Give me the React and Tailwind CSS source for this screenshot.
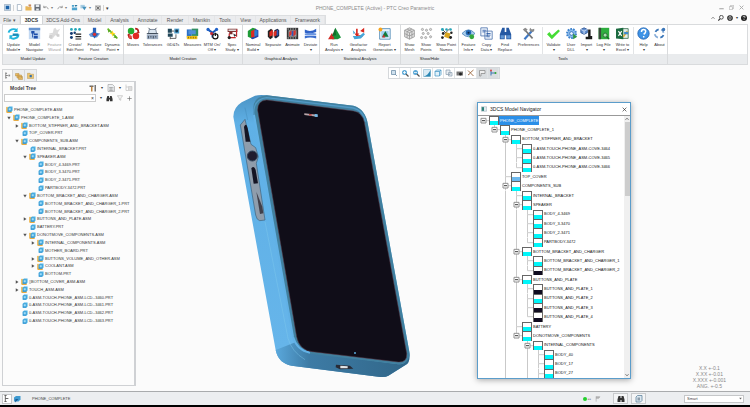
const CYAN = "#00f6fa";

const ribbonIcons = {
  update: (
    <g fill="none" stroke="#21b5dc" strokeWidth="2.4">
      <path d="M2 7a6 5 0 0 1 10-3M14 9a6 5 0 0 1-10 4" />
      <path d="M13 1v5H8zM3 15v-5h5z" fill="#21b5dc" stroke="none" />
      <path d="M7 8h7v3H7z" fill="#1b8bb9" stroke="none" />
    </g>
  ),
  navigator: (
    <g>
      <path d="M1 1h14v14H1z" fill="#c3d9f2" />
      <path d="M1 1h14v3H1z" fill="#6794d0" />
      <path d="M4 5h4v3H4zM7 8h5v2H7zM7 11h5v3H7zM5 8h1v5H5z" fill="#1d4faa" />
    </g>
  ),
  wizard: (
    <g fill="#b9b9b9">
      <path d="M7 2l2-1 2 3 4-2-3 5 2 4-5-1-4 5-3-2 4-3-5-2 5-1z" />
      <path d="M2 9l4 1-2 5-3-2zM10 9h4v3h-3z" fill="#a0a0a0" />
    </g>
  ),
  create: (
    <g>
      <g fill="#24a7b9"><circle cx="3" cy="3" r="1.7" /><circle cx="8" cy="3" r="1.7" /><circle cx="13" cy="3" r="1.7" /></g>
      <g fill="#143c72"><circle cx="3" cy="8" r="1.8" /><circle cx="7" cy="7" r="1.5" /><circle cx="3" cy="13" r="1.8" /></g>
      <path d="M8 8h7v1.500H8zM8 11h7v1.500H8zM8 14h7v1.500H8z" fill="#222" />
    </g>
  ),
  featurePoint: (
    <g>
      <path d="M1 9l5-3 9 2-4 5-8-1z" fill="#6d9ad6" />
      <path d="M6 1h4v7h3l-5 6-4-6h2z" fill="#2862b8" />
      <circle cx="8" cy="9" r="2" fill="#d33" />
    </g>
  ),
  dynamic: (
    <g>
      <path d="M2 2l12 12" stroke="#6bbf2b" strokeWidth="2" />
      <path d="M2 3l4 1-3 3zM14 14l-5-1 3-3z" fill="#5aa823" />
      <path d="M8 4l1 3 3 1-3 1-1 3-1-3-3-1 3-1z" fill="#ffd51e" />
    </g>
  ),
  moves: (
    <g>
      <circle cx="5" cy="5" r="4" fill="#26ac32" />
      <circle cx="11" cy="11" r="4" fill="#e02a22" />
      <path d="M10 1q5 0 5 5l1 0-2 2-3-2h2q0-3-3-3zM6 15q-5 0-5-5H0l2-2 3 2H3q0 3 3 3z" fill="#b5231e" />
      <circle cx="4" cy="12" r="2" fill="#e4483e" />
    </g>
  ),
  tolerances: (
    <g>
      <path d="M1 9h14v6H1z" fill="#9babc0" />
      <path d="M4 3h8l1 5H3z" fill="#dbe5ef" stroke="#68788c" />
      <path d="M1 8h14M3 11v3M6 11v2M9 11v3M12 11v2M3 1l2 2M13 1l-2 2" stroke="#333d4b" />
    </g>
  ),
  gdt: (
    <g>
      <path d="M1 2h5v5H1zM1 8h6v4H1z" fill="#23485a" />
      <path d="M9 2h6v6H9z" fill="#4f9ecb" />
      <circle cx="12" cy="5" r="1.800" fill="#15364c" />
      <path d="M6 5h3M4 12v3M4 14h7V9" stroke="#444" fill="none" />
    </g>
  ),
  measures: (
    <g>
      <path d="M1 3h6v10H1z" fill="#2b6fc4" />
      <path d="M7 2h8v9H7z" fill="#2f8f62" />
      <path d="M1 11h13v4H1z" fill="#f2c31d" />
      <path d="M3 4h9v5H3z" fill="#4f8fd8" />
      <path d="M3 12v2M6 12v2M9 12v2M12 12v2" stroke="#775a00" />
    </g>
  ),
  mtm: (
    <g>
      <path d="M2 3l6 4 5-4M8 7v6" stroke="#1b57b8" strokeWidth="2.500" fill="none" />
      <circle cx="2.500" cy="3" r="2" fill="#2163c9" />
      <circle cx="13" cy="3" r="2" fill="#2163c9" />
      <circle cx="7" cy="8" r="2" fill="#c62835" />
      <circle cx="11.500" cy="11.500" r="3.200" fill="#fff" stroke="#111" strokeWidth="1.500" />
      <path d="M11.500 7v4" stroke="#111" strokeWidth="1.500" />
    </g>
  ),
  spec: (
    <g>
      <path d="M2 2h12v4H8v3H4V6H2z" fill="#7d2c2c" />
      <path d="M3 3h10v2H3z" fill="#ddd" />
      <path d="M13 3v9M4 8v5h8" stroke="#c4262b" strokeWidth="1.500" fill="none" />
      <circle cx="4" cy="13" r="2" fill="#222" />
      <path d="M9 8l4 2-3 2z" fill="#333" />
    </g>
  ),
  nominal: (
    <g>
      <path d="M1 5l6-4 4 1-5 12-5-2z" fill="#1f9b37" />
      <path d="M10 2l4 2v8l-7 3-2-1z" fill="#2545ac" />
      <path d="M5 5l5-2v9l-5 1z" fill="#dd2b21" />
      <path d="M9 4l4 0v6l-4 2z" fill="#2b7ed1" />
    </g>
  ),
  separate: (
    <g>
      <path d="M1 5l4-3 2 2v9l-3 2-3-3z" fill="#222" />
      <path d="M3 6l4-3v7l-4 2z" fill="#e0291f" />
      <path d="M9 4l4-2 2 2v7l-4 3-2-1z" fill="#17253f" />
      <path d="M8 6l4-2v6l-4 2z" fill="#dd2f24" />
      <path d="M12 3l2 1v6l-2 1z" fill="#2f58b9" />
    </g>
  ),
  animate: (
    <g>
      <path d="M1 1h14v14H1z" fill="#353535" />
      <path d="M2 2.500h12M2 13.500h12" stroke="#eee" strokeDasharray="1.500 1.500" />
      <path d="M3 4h10v8H3z" fill="#9b9b9b" />
      <path d="M4 6l3-2v5l-3 3zM9 5l3-1v5l-3 3z" fill="#d6342c" />
      <path d="M7 5h2v6H7z" fill="#3156b5" />
    </g>
  ),
  deviate: (
    <g>
      <path d="M1 3q7 4 14-1v4q-7 3-14 1z" fill="#2f62c7" />
      <path d="M1 8q7-2 14 0v2q-7 1-14 0z" fill="#6b95e0" />
      <path d="M1 11q7 0 14 0v3q-8-2-14 0z" fill="#3c6fce" />
    </g>
  ),
  run: (
    <g>
      <path d="M9 1l7 12-4 2H5z" fill="#18943a" />
      <path d="M5 7l3 8H0z" fill="#d22c24" />
      <path d="M9 1l1 9-5 1z" fill="#0f6d2a" />
    </g>
  ),
  geo: (
    <g>
      <path d="M6 2v9h7" stroke="#d8281f" strokeWidth="2" fill="none" />
      <path d="M3 8l3 4 3-4zM10 5l5-4v6z" fill="#d8281f" />
      <path d="M1 11h8l5-4 2 2-5 5-8 1z" fill="#47a6d8" />
      <path d="M1 4l3 3-2 2z" fill="#47a6d8" />
    </g>
  ),
  report: (
    <g>
      <path d="M2 2h13v13H2z" fill="#eaf4fb" stroke="#4c88b5" />
      <path d="M4 5h9v8H4z" fill="#9fd0ef" />
      <path d="M9 5l4 7H5z" fill="#147a3c" />
      <path d="M7 9l2 4H5z" fill="#c7302b" />
      <circle cx="3" cy="3" r="2.400" fill="#f6a41e" />
    </g>
  ),
  mesh: (
    <g fill="#e2e2e2" stroke="#979797">
      <path d="M8 1l6 3v8l-6 3-6-3V4z" />
      <path d="M2 4l6 3 6-3M8 7v8M2 8l6 3 6-3M5 2.500l6 3v8M11 2.500l-6 3v8" fill="none" />
    </g>
  ),
  points: (
    <g fill="#d9d9d9" stroke="#9c9c9c">
      <circle cx="3" cy="3" r="1.300" /><circle cx="8" cy="4" r="1.300" /><circle cx="13" cy="3" r="1.300" />
      <circle cx="4" cy="8" r="1.300" /><circle cx="10" cy="8" r="1.300" /><circle cx="2" cy="13" r="1.300" />
      <circle cx="7" cy="13" r="1.300" /><circle cx="13" cy="12" r="1.300" />
    </g>
  ),
  names: (
    <g>
      <path d="M7 6l6 2-2 6-6-2z" fill="#d9a51f" />
      <path d="M3 3l4 4 5-5" stroke="#333" fill="none" />
      <g fill="#27a4b8"><circle cx="3" cy="3" r="1.800" /><circle cx="8" cy="3" r="1.600" /><circle cx="13" cy="3" r="1.600" /></g>
      <g fill="#222"><circle cx="4" cy="8" r="1.700" /><circle cx="14" cy="7" r="1.500" /><circle cx="3" cy="13" r="1.700" /><circle cx="13" cy="13" r="1.800" /></g>
    </g>
  ),
  info: (
    <g>
      <path d="M0 8q8-9 16 0-8 8-16 0z" fill="#a9cdec" stroke="#4a82b8" />
      <circle cx="8" cy="7" r="3.400" fill="#2369b5" />
      <circle cx="8" cy="7" r="1.300" fill="#0d2748" />
      <circle cx="12" cy="12" r="3" fill="#35a83e" />
    </g>
  ),
  copy: (
    <g>
      <path d="M1 1h8v10H1zM6 5h9v10H6z" fill="#f1f6fd" stroke="#4d74ad" />
      <path d="M3 4h4M3 6h3M8 8h5M8 10h5M8 12h4" stroke="#2153a0" />
    </g>
  ),
  find: (
    <g>
      <path d="M4 1h3v5h2V1h3l3 8v6H9v-5H7v5H1V9z" fill="#2458a3" />
      <path d="M2 10h4v4H2zM10 10h4v4h-4z" fill="#5f95d4" />
    </g>
  ),
  prefs: (
    <g>
      <path d="M3 15L13 4" stroke="#3f78c4" strokeWidth="2.600" />
      <path d="M3 3l10 11" stroke="#777" strokeWidth="2" />
      <path d="M10 1l2 2 3-1q1 4-3 4L9 4zM1 3l3-2 3 2-3 3z" fill="#8b8b8b" />
    </g>
  ),
  validate: <path d="M0 9l3-3 3 4 8-7 2 2L6 15z" fill="#45dc35" />,
  dll: (
    <g>
      <circle cx="8" cy="8" r="5.500" fill="#8fbfee" stroke="#3e82cc" strokeWidth="2.500" strokeDasharray="2 1.400" />
      <circle cx="8" cy="8" r="2.300" fill="#eaf4fe" stroke="#2c67b4" />
      <path d="M10 8l5 4-5 3z" fill="#2f9446" />
    </g>
  ),
  importer: (
    <g>
      <path d="M5 1l4 2v4L5 9 1 7V3z" fill="#6490cf" stroke="#254e91" />
      <path d="M1 3l4 2 4-2M5 5v4" stroke="#dce9fa" fill="none" />
      <path d="M10 3h3v8h2v4H7v-3h3z" fill="#1c1c1c" />
    </g>
  ),
  log: (
    <g>
      <path d="M2 1h13v14H2z" fill="#2fae3f" />
      <path d="M2 1h3v14H2z" fill="#3a4a3c" />
      <circle cx="10" cy="10" r="2.500" fill="#a9dcb0" stroke="#1b6428" />
      <path d="M12 12l3 3" stroke="#1b6428" strokeWidth="1.500" />
    </g>
  ),
  excel: (
    <g>
      <path d="M7 2h8v12H7z" fill="#e5efe7" stroke="#366f4d" />
      <path d="M0 2l9-1v14l-9-1z" fill="#1c6b40" />
      <path d="M3 5l4 6M7 5l-4 6" stroke="#fff" strokeWidth="1.400" />
      <path d="M9 12l5-7" stroke="#e7a82d" strokeWidth="1.800" />
      <path d="M10 6h5v3h-5z" fill="#3e89c9" />
    </g>
  ),
  help: (
    <g>
      <circle cx="8" cy="8" r="7" fill="#3e93e6" stroke="#2363b0" />
      <path d="M5.500 6q0-3 2.600-3t2.600 2.500q0 1.500-2.500 3.500M8.200 11v2" stroke="#fff" strokeWidth="1.800" fill="none" />
    </g>
  ),
  about: (
    <g fill="none" strokeWidth="2.200">
      <path d="M3 6a6 6 0 0 1 4-3M13 10a6 6 0 0 1-4 3" stroke="#3975b8" />
      <path d="M10 3a6 6 0 0 1 3 4M6 13a6 6 0 0 1-4-4" stroke="#86acd8" />
      <circle cx="13" cy="3" r="1" stroke="#3975b8" />
    </g>
  ),
};

const groups = [
  {
    title: "Model Update",
    box: "w-[61px]",
    items: [
      ["update", "w-[21px]", "Update", "Model ▾"],
      ["navigator", "w-[21px]", "Model", "Navigator"],
      ["wizard", "w-[19px] opacity-50", "Feature", "Wizard"],
    ],
  },
  {
    title: "Feature Creation",
    box: "w-[60px]",
    items: [
      ["create", "w-[22px]", "Create/", "Edit Point"],
      ["featurePoint", "w-[17px]", "Feature", "Point"],
      ["dynamic", "w-[19px]", "Dynamic", "Point ▾"],
    ],
  },
  {
    title: "Model Creation",
    box: "w-[119px]",
    items: [
      ["moves", "w-[18px]", "Moves", ""],
      ["tolerances", "w-[21px]", "Tolerances", ""],
      ["gdt", "w-[20px]", "GD&Ts", ""],
      ["measures", "w-[19px]", "Measures", ""],
      ["mtm", "w-[20px]", "MTM On/", "Off ▾"],
      ["spec", "w-[20px]", "Spec", "Study ▾"],
    ],
  },
  {
    title: "Graphical Analysis",
    box: "w-[77px]",
    items: [
      ["nominal", "w-[20px]", "Nominal", "Build ▾"],
      ["separate", "w-[20px]", "Separate", ""],
      ["animate", "w-[19px]", "Animate", ""],
      ["deviate", "w-[17px]", "Deviate", "▾"],
    ],
  },
  {
    title: "Statistical Analysis",
    box: "w-[81px]",
    items: [
      ["run", "w-[28px]", "Run", "Analysis ▾"],
      ["geo", "w-[21px]", "Geofactor", "Analysis"],
      ["report", "w-[31px]", "Report", "Generation ▾"],
    ],
  },
  {
    title: "Show/Hide",
    box: "w-[58px]",
    items: [
      ["mesh", "w-[17px]", "Show", "Mesh"],
      ["points", "w-[16px]", "Show", "Points"],
      ["names", "w-[24px]", "Show Point", "Names"],
    ],
  },
  {
    title: "Tools",
    box: "w-[209px]",
    items: [
      ["info", "w-[19px]", "Feature", "Info ▾"],
      ["copy", "w-[17px]", "Copy", "Data ▾"],
      ["find", "w-[20px]", "Find", "Replace"],
      ["prefs", "w-[27px]", "Preferences", ""],
      ["validate", "w-[22px] border-l border-[#e2e4e6]", "Validate", "▾"],
      ["dll", "w-[14px]", "User", "DLL"],
      ["importer", "w-[17px]", "Import", "▾"],
      ["log", "w-[17px]", "Log File", "▾"],
      ["excel", "w-[21px]", "Write to", "Excel ▾"],
      ["help", "w-[20px] border-l border-[#e2e4e6]", "Help", "▾"],
      ["about", "w-[13px]", "About", ""],
    ],
  },
];

const tabs = [
  ["File ▾", "w-[20px]"],
  ["3DCS", "w-[23px]"],
  ["3DCS Add-Ons", "w-[41px]"],
  ["Model", "w-[22px]"],
  ["Analysis", "w-[28px]"],
  ["Annotate", "w-[28px]"],
  ["Render", "w-[27px]"],
  ["Manikin", "w-[26px]"],
  ["Tools", "w-[21px]"],
  ["View", "w-[20px]"],
  ["Applications", "w-[35px]"],
  ["Framework", "w-[34px]"],
];

// level, name, state: "o" open, "c" closed, "" leaf
const modelTree = [
  [0, "PHONE_COMPLETE.ASM", ""],
  [1, "PHONE_COMPLETE_1.ASM", "o"],
  [2, "BOTTOM_STIFFNER_AND_BRACKET.ASM", "c"],
  [2, "TOP_COVER.PRT", ""],
  [2, "COMPONENTS_SUB.ASM", "o"],
  [3, "INTERNAL_BRACKET.PRT", ""],
  [3, "SPEAKER.ASM", "o"],
  [4, "BODY_4-3469.PRT", ""],
  [4, "BODY_3-3470.PRT", ""],
  [4, "BODY_2-3471.PRT", ""],
  [4, "PARTBODY-3472.PRT", ""],
  [3, "BOTTOM_BRACKET_AND_CHARGER.ASM", "o"],
  [4, "BOTTOM_BRACKET_AND_CHARGER_1.PRT", ""],
  [4, "BOTTOM_BRACKET_AND_CHARGER_2.PRT", ""],
  [3, "BUTTONS_AND_PLATE.ASM", "c"],
  [3, "BATTERY.PRT", ""],
  [3, "DONOTMOVE_COMPONENTS.ASM", "o"],
  [4, "INTERNAL_COMPONENTS.ASM", "c"],
  [4, "MOTHER_BOARD.PRT", ""],
  [4, "BUTTONS_VOLUME_AND_OTHER.ASM", "c"],
  [4, "COOLANT.ASM", "c"],
  [4, "BOTTOM.PRT", ""],
  [2, "▯BOTTOM_COVER_ASM.ASM", "c"],
  [2, "TOUCH_ASM.ASM", "c"],
  [2, "0-ASM-TOUCH-PHONE_ASM-LCD--3460.PRT", ""],
  [2, "0-ASM-TOUCH-PHONE_ASM-LCD--3461.PRT", ""],
  [2, "0-ASM-TOUCH-PHONE_ASM-LCD--3462.PRT", ""],
  [2, "0-ASM-TOUCH-PHONE_ASM-LCD--3463.PRT", ""],
];

const DARK = "#100c20";

// level, name, has children, fill colour
const navTree = [
  [0, "PHONE_COMPLETE", true, CYAN],
  [1, "PHONE_COMPLETE_1", true, CYAN],
  [2, "BOTTOM_STIFFNER_AND_BRACKET", true, CYAN],
  [3, "0-ASM-TOUCH-PHONE_ASM-COVE-3464", false, CYAN],
  [3, "0-ASM-TOUCH-PHONE_ASM-COVE-3465", false, CYAN],
  [3, "0-ASM-TOUCH-PHONE_ASM-COVE-3466", false, CYAN],
  [2, "TOP_COVER", false, "#6db9ee"],
  [2, "COMPONENTS_SUB", true, CYAN],
  [3, "INTERNAL_BRACKET", false, CYAN],
  [3, "SPEAKER", true, CYAN],
  [4, "BODY_4-3469", false, CYAN],
  [4, "BODY_3-3470", false, CYAN],
  [4, "BODY_2-3471", false, CYAN],
  [4, "PARTBODY-3472", false, CYAN],
  [3, "BOTTOM_BRACKET_AND_CHARGER", true, CYAN],
  [4, "BOTTOM_BRACKET_AND_CHARGER_1", false, CYAN],
  [4, "BOTTOM_BRACKET_AND_CHARGER_2", false, DARK],
  [3, "BUTTONS_AND_PLATE", true, CYAN],
  [4, "BUTTONS_AND_PLATE_1", false, DARK],
  [4, "BUTTONS_AND_PLATE_2", false, CYAN],
  [4, "BUTTONS_AND_PLATE_3", false, DARK],
  [4, "BUTTONS_AND_PLATE_4", false, DARK],
  [3, "BATTERY", false, CYAN],
  [3, "DONOTMOVE_COMPONENTS", true, CYAN],
  [4, "INTERNAL_COMPONENTS", true, CYAN],
  [5, "BODY_40", false, CYAN],
  [5, "BODY_17", false, CYAN],
  [5, "BODY_27", false, CYAN],
];

// the list is cut off by the window, so these levels carry on below it
const openLevels = [2, 4, 5];

function hasNextSibling(index, level) {
  for (let i = index + 1; i < navTree.length; i++) {
    if (navTree[i][0] === level) return true;
    if (navTree[i][0] < level) return false;
  }
  return openLevels.includes(level);
}

function Icon({ children, className = "size-[13px]" }) {
  return (
    <svg viewBox="0 0 16 16" className={`shrink-0 ${className}`} aria-hidden="true">
      {children}
    </svg>
  );
}

function TitleBar() {
  return (
    <header className="grid h-[15px] grid-cols-[1fr_auto_1fr] items-center px-1">
      <div className="flex items-center gap-[2px]">
        <Icon className="size-[7px]"><path d="M1 1h14v14H1z" fill="#cfe0ef" stroke="#6a8199" /><path d="M4 4h8v8H4z" fill="#1c62a8" /></Icon>
        <span className="h-[6px] w-px bg-[#d5d5d5]" />
        <Icon className="size-[7px]"><path d="M3 1h7l3 3v11H3z" fill="#fff" stroke="#8a9db2" strokeWidth="1.500" /></Icon>
        <Icon className="size-[7px]"><path d="M1 5h5l1 2h8v8H1z" fill="#e8b65a" /><path d="M8 1h6v5H8z" fill="#c98a5a" /></Icon>
        <Icon className="size-[7px]"><path d="M1 1h14v14H1z" fill="#666c75" /><path d="M4 1h8v6H4zM5 10h6v5H5z" fill="#e5e9ee" /></Icon>
        <Icon className="size-[6px]"><path d="M2 6q9-4 12 5M2 2v5h5" fill="none" stroke="#888" strokeWidth="2" /></Icon>
        <span className="text-[4px] text-[#777]">▾</span>
        <Icon className="ml-[2px] size-[6px]"><path d="M14 6Q5 2 2 11M14 2v5H9" fill="none" stroke="#888" strokeWidth="2" /></Icon>
        <span className="text-[4px] text-[#777]">▾</span>
        <Icon className="ml-[2px] size-[7px]"><path d="M2 2h5v4H2zM2 8h12v6H2z" fill="#4ea4cf" /><path d="M8 2h7l-4 5z" fill="#28749c" /></Icon>
        <Icon className="size-[7px]"><path d="M1 2h10v8H1z" fill="#a7cde3" /><path d="M5 6h10l-5 8z" fill="#4591bc" /></Icon>
        <span className="text-[4px] text-[#777]">▾</span>
        <Icon className="ml-[2px] size-[6px]"><path d="M1 2h14v12H1z" fill="#ccc" stroke="#777" /><path d="M4 4l8 8M12 4l-8 8" stroke="#555" strokeWidth="2" /></Icon>
        <span className="h-[6px] w-px bg-[#d5d5d5]" />
        <span className="text-[5px] text-[#333]">▾</span>
      </div>
      <h1 className="text-[5px] text-[#8b8b8b]">PHONE_COMPLETE (Active) - PTC Creo Parametric</h1>
      <div className="flex justify-end gap-[5px] pr-[2px]">
        <button aria-label="Minimize"><Icon className="size-[5px]"><path d="M1 12h14" stroke="#999" strokeWidth="3" /></Icon></button>
        <button aria-label="Restore"><Icon className="size-[5px]"><path d="M1 5h10v10H1zM5 5V1h10v10h-4" fill="none" stroke="#aaa" strokeWidth="2" /></Icon></button>
        <button aria-label="Close"><Icon className="size-[5px]"><path d="M2 2l12 12M14 2L2 14" stroke="#aaa" strokeWidth="3" /></Icon></button>
      </div>
    </header>
  );
}

function Tabs() {
  return (
    <nav className="flex h-[9px] items-end justify-between pr-[3px] text-[5px]">
      <div className="flex h-full border-t border-r border-[#dcdee0] bg-[#ebecee]">
        {tabs.map(([name, width]) => (
          <button
            key={name}
            className={`flex items-center justify-center border-r whitespace-nowrap ${width} ${
              name === "3DCS" ? "border-x border-[#d3d5d7] bg-white font-bold text-[#333]" : "border-[#e4e5e7] text-[#555]"
            }`}
          >
            {name}
          </button>
        ))}
      </div>
      <div className="flex items-center gap-[3px] pb-[3px]">
        <Icon className="size-[4px]"><path d="M2 11l6-6 6 6" stroke="#555" strokeWidth="3" fill="none" /></Icon>
        <Icon className="size-[6px]"><circle cx="9" cy="6" r="5" fill="none" stroke="#222" strokeWidth="2" /><path d="M5 10l-4 5" stroke="#222" strokeWidth="3" /></Icon>
        <Icon className="size-[6px]"><circle cx="8" cy="8" r="6" fill="#ddd" stroke="#222" strokeWidth="3" /><path d="M4 8h8" stroke="#222" strokeWidth="3" /></Icon>
        <span className="text-[4px]">▾</span>
        <Icon className="size-[6px]"><circle cx="8" cy="8" r="8" fill="#222" /><path d="M5.500 6q0-3 2.600-3t2.600 2.500q0 1.500-2.500 3.500M8.200 11v2" stroke="#fff" strokeWidth="2" fill="none" /></Icon>
      </div>
    </nav>
  );
}

function Ribbon() {
  return (
    <div className="mx-[2px] flex h-[41px] border border-[#d9dbdd] bg-white">
      {groups.map((group) => (
        <section key={group.title} className={`flex shrink-0 flex-col border-r border-[#d9dbdd] ${group.box}`}>
          <div className="flex flex-1 pt-[2px]">
            {group.items.map(([icon, width, top, bottom]) => (
              <button key={icon} className={`flex shrink-0 flex-col items-center whitespace-nowrap ${width}`}>
                <Icon>{ribbonIcons[icon]}</Icon>
                <span className="mt-[2px] leading-[5px]">{top}</span>
                <span className="leading-[5px]">{bottom}</span>
              </button>
            ))}
          </div>
          <h2 className="h-[10px] bg-[#e9ebed] text-center leading-[10px] text-[#222]">{group.title}</h2>
        </section>
      ))}
      <div className="mt-auto h-[10px] flex-1 bg-[#e9ebed]" />
    </div>
  );
}

const treePads = ["pl-0", "pl-0", "pl-[8px]", "pl-[16px]", "pl-[24px]"];

function PartIcon({ assembly }) {
  return (
    <Icon className="size-[7px]">
      {assembly && <path d="M0 2h8v13H0z" fill="#f0c169" />}
      {assembly && <path d="M2 11h11v5H2z" fill="#e7ad49" />}
      <path d="M4 4l3-3h8v9l-3 3H4z" fill="#4fb1e3" />
      <path d="M4 4h8v9H4z" fill="#2f95d2" />
      <path d="M6 5h5v5H6z" fill="#9edcf7" />
    </Icon>
  );
}

function ModelTreePanel() {
  return (
    <aside className="flex w-[136px] shrink-0 flex-col pt-[4px] pb-[5px] pl-[2px] text-[#333]">
      <div className="flex h-[12px]">
        <button aria-label="Model tree" className="flex w-[11px] items-center justify-center border border-b-0 border-[#d5d7d9] bg-[#fafafa]">
          <Icon className="size-[7px]"><path d="M4 1v14M4 8h5M4 3h3M4 13h3" stroke="#555" strokeWidth="1.500" /><path d="M10 6h4v4h-4z" fill="#888" /></Icon>
        </button>
        <button aria-label="Folder browser" className="flex w-[12px] items-center justify-center border-t border-r border-[#d5d7d9] bg-[#eceef0]">
          <Icon className="size-[8px]"><path d="M1 3h7v5H1zM4 6h9v6H4zM7 9h8v6H7z" fill="#edbe62" stroke="#b18b45" /></Icon>
        </button>
        <button aria-label="Favorites" className="flex w-[12px] items-center justify-center border-t border-r border-[#d5d7d9] bg-[#eceef0]">
          <Icon className="size-[7px]"><path d="M1 3h6l1 2h7v10H1z" fill="#efc66e" stroke="#b18b45" /><path d="M6 7h5v5H6z" fill="#2c6fb0" /></Icon>
        </button>
      </div>
      <div className="flex flex-1 flex-col border border-r-2 border-[#cfd1d4] bg-[#fcfcfc]">
        <div className="flex h-[11px] items-center gap-[4px] pr-px pl-[7px]">
          <h2 className="flex-1 text-[5px] font-bold text-[#444]">Model Tree</h2>
          <Icon className="size-[8px]"><path d="M1 3h8v3H1z" fill="#666" /><path d="M4 5h3v10H4z" fill="#bf8540" /><path d="M11 2h3v13h-3z" fill="#777" /></Icon>
          <span>▾</span>
          <Icon className="size-[8px]"><path d="M2 1h9l4 4v10H2z" fill="#edf0f2" stroke="#888" /><path d="M4 7h9M4 10h9M4 13h9M8 6v8" stroke="#888" /></Icon>
          <span>▾</span>
          <Icon className="size-[8px]"><path d="M2 1v12h5M2 6h5" stroke="#aaa" fill="none" /><path d="M7 5h7v8H7z" fill="#ddd" stroke="#bbb" /></Icon>
        </div>
        <div className="flex h-[10px] items-center gap-[4px] pr-[2px] pl-px">
          <label className="flex h-[8px] flex-1 items-center border border-[#ccc] bg-white">
            <input aria-label="Search tree" className="h-full w-0 flex-1 outline-none" />
            <span className="px-px text-[5px]">×</span>
          </label>
          <span>▾</span>
          <Icon className="size-[7px]"><path d="M3 2h4v4h2V2h4l2 7v5H9v-4H7v4H1V9z" fill="#333" /></Icon>
          <Icon className="size-[6px]"><path d="M1 2h14l-5 6v6l-4-2V8z" fill="none" stroke="#aaa" strokeWidth="1.500" /></Icon>
          <Icon className="size-[5px]"><path d="M8 1v14M1 8h14" stroke="#666" strokeWidth="2" /></Icon>
        </div>
        <ul className="mt-[3px] grid h-[219px] auto-rows-fr pl-[3px]">
          {modelTree.map(([level, name, state]) => (
            <li key={name} className={`flex items-center gap-px whitespace-nowrap ${treePads[level]}`}>
              {level > 0 && (
                <span className="flex w-[6px] justify-center">
                  <Icon className="size-[4px]">
                    {state === "o" && <path d="M1 3h14l-7 11z" fill="#555" />}
                    {state === "c" && <path d="M3 1v14l11-7z" fill="#555" />}
                  </Icon>
                </span>
              )}
              <PartIcon assembly={name.endsWith(".ASM")} />
              <span>{name}</span>
            </li>
          ))}
        </ul>
      </div>
    </aside>
  );
}

function Phone() {
  return (
    <svg viewBox="0 0 585 885" className="h-[295px] w-[195px] shrink-0" role="img" aria-label="Phone assembly">
      <defs>
        <linearGradient id="side" x1="0" y1="0" x2="0" y2="1">
          <stop offset="0" stopColor="#4a93c4" />
          <stop offset="0.1" stopColor="#5fb0e6" />
          <stop offset="0.9" stopColor="#66b5ea" />
          <stop offset="1" stopColor="#3f80ac" />
        </linearGradient>
        <linearGradient id="base" x1="0" y1="0" x2="1" y2="0">
          <stop offset="0" stopColor="#5aa8dc" />
          <stop offset="0.25" stopColor="#3d7ba5" />
          <stop offset="1" stopColor="#316688" />
        </linearGradient>
      </defs>
      <path d="M25 95Q25 68 50 52L90 32Q105 28 125 31L385 62Q422 72 429 120L553 800Q556 830 545 838L490 872Q480 878 460 875L200 842Q160 835 152 795Z" fill="url(#side)" />
      <path d="M152 795L215 770Q235 800 262 803L520 838Q550 838 553 800Q556 830 545 838L490 872Q480 878 460 875L200 842Q160 835 152 795Z" fill="url(#base)" />
      <path d="M85 70Q85 35 125 31L385 62Q422 72 429 120L553 800Q556 836 520 838L255 806Q215 798 204 755Z" fill="#41809f" />
      <path d="M86 90Q84 42 125 38L385 69Q415 77 422 110" fill="none" stroke="#5199c6" strokeWidth="4" />
      <path d="M87 90L204 755Q215 795 255 803" fill="none" stroke="#62b1e6" strokeWidth="6" />
      <path d="M120 410L189 760Q200 800 240 824" fill="none" stroke="#83ccee" strokeWidth="2" opacity=".6" />
      <path d="M60 68L68 105" stroke="#3c80ad" strokeWidth="2" opacity=".5" />
      <path d="M98 75Q98 47 125 45L385 78Q412 82 418 112L545 805Q547 833 520 831L262 800Q223 795 215 755Z" fill="#100d18" stroke="#5b3440" strokeWidth="1.500" />
      <path d="M46 120L60 103L78 178L92 188L100 215L94 235L120 405L104 407Q95 405 92 390Z" fill="#8f9dac" stroke="#39627f" strokeWidth="2" />
      <path d="M57 125Q64 112 68 130L76 170L62 170Z" fill="#151524" />
      <circle cx="82" cy="213" r="15" fill="#201d30" stroke="#30455c" strokeWidth="3" />
      <path d="M79 250Q87 240 92 255L99 295L86 296Z" fill="#151524" />
      <path d="M94 320L112 365L115 385L105 387Z" fill="#403f4a" />
      <path d="M238 85L277 89V95L238 90Z" fill="#b9a6aa" />
      <path d="M252 87l8 1v4l-8-1z" fill="#b73535" />
      <path d="M269 87l9 1v8l-9-1z" fill="#72bbea" />
      <path d="M333 839L375 842L385 851L345 853L332 847Z" fill="#292b36" />
      <path d="M346 842l22 2v6l-22 0z" fill="#e2e3e5" />
      <circle cx="390" cy="804" r="3" fill="#58a9da" />
    </svg>
  );
}

const viewTools = [
  ["Refit", <path key="a" d="M3 3h8v8H3zM10 10l4 4" fill="#cfe1ee" stroke="#6a8ba5" strokeWidth="1.500" />],
  ["Zoom in", <g key="a"><circle cx="7" cy="7" r="5" fill="#5ba8d6" /><path d="M10 10l5 5" stroke="#555" strokeWidth="2.500" /><path d="M4 7h6M7 4v6" stroke="#fff" strokeWidth="1.500" /></g>],
  ["Zoom out", <g key="a"><circle cx="7" cy="7" r="5" fill="#5ba8d6" /><path d="M10 10l5 5" stroke="#555" strokeWidth="2.500" /><path d="M4 7h6" stroke="#fff" strokeWidth="1.500" /></g>],
  ["Repaint", <g key="a"><path d="M1 1h14v14H1z" fill="#d9ebf5" stroke="#7aaac4" /><path d="M15 2v13H1q9-2 14-13z" fill="#2b87b4" /></g>],
  ["Display style", <path key="a" d="M2 5l3-3h9v9l-3 3H2zM2 5h9v9M11 5l3-3" fill="#e2f2fb" stroke="#4596c4" strokeWidth="1.500" />],
  ["Saved orientations", <path key="a" d="M2 2h8v9H2zM7 7h7v7H7z" fill="#e9eef2" stroke="#8fa2b1" strokeWidth="1.500" />],
  ["View manager", <g key="a"><path d="M1 5h13v8H1z" fill="#777" /><circle cx="9" cy="10" r="3" fill="#222" /></g>],
  ["Datum display", <g key="a" stroke="#a3734d" strokeWidth="2"><path d="M2 3l11 11M13 2L6 8M2 12l4-3" /></g>],
  ["Annotations", <path key="a" d="M3 3h11v6H6v5H3z" fill="#eee" stroke="#888" strokeWidth="1.500" />],
  ["Spin center", <g key="a"><path d="M4 3v10M4 8h10" stroke="#3c76b4" strokeWidth="2" /><circle cx="4" cy="3" r="2" fill="#d44" /><circle cx="13" cy="8" r="2" fill="#3a3" /></g>],
];

function ViewToolbar() {
  return (
    <div className="absolute top-[2px] left-[252px] flex h-[12px] border border-[#d5d8db] bg-white">
      {viewTools.map(([name, drawing], i) => (
        <button
          key={name}
          aria-label={name}
          className={`flex w-[11px] items-center justify-center border-r border-[#e1e4e6] ${i > 7 ? "bg-[#d9dde0]" : ""}`}
        >
          <Icon className="size-[8px]">{drawing}</Icon>
        </button>
      ))}
    </div>
  );
}

function NavRow({ index, level, name, parent, fill }) {
  const cells = Array.from({ length: level }, (_, i) => i);
  return (
    <li className="flex min-h-0 items-stretch whitespace-nowrap">
      {cells.map((i) => (
        <span key={i} className="flex w-[11px] shrink-0 justify-center">
          {i > 0 && hasNextSibling(index, i) && <span className="w-px bg-[#c9c9c9]" />}
        </span>
      ))}
      <span className="flex w-[11px] shrink-0 items-center">
        {/* elbow, with the toggle in the middle of it for parents */}
        <svg viewBox="0 0 11 10" preserveAspectRatio="none" className="h-full w-full" aria-hidden="true">
          <path d={`M5.500 5H11${level > 0 ? "M5.500 0V5" : ""}${hasNextSibling(index, level) ? "M5.500 5V10" : ""}`} stroke="#c9c9c9" fill="none" />
          {parent && <path d="M3 2.500h5v5H3z" fill="#fff" stroke="#8d8d8d" />}
          {parent && <path d="M4 5h3" stroke="#333" />}
        </svg>
      </span>
      <span className="flex w-[10px] shrink-0 flex-col justify-end border border-b-0 border-[#666] bg-white">
        <span className="h-[4px]" style={{ backgroundColor: fill }} />
      </span>
      <span className={`flex items-center px-px ${level === 0 ? "bg-[#2b8fe8] text-white" : "text-[#111]"}`}>{name}</span>
    </li>
  );
}

function Navigator() {
  return (
    <section className="absolute top-[37px] left-[341px] w-[154px] border border-[#5b9dcb] bg-white shadow-[0_1px_6px_rgba(0,0,0,0.35)]">
      <header className="flex h-[12px] items-center gap-[3px] px-[3px]">
        <Icon className="size-[6px]"><path d="M1 2h14v12H1z" fill="#dfeaf0" stroke="#7a8b95" /><path d="M2 3h6v10H2z" fill="#2d7f78" /></Icon>
        <h2 className="flex-1 text-[5px] text-[#222]">3DCS Model Navigator</h2>
        <button aria-label="Close navigator"><Icon className="size-[5px]"><path d="M2 2l12 12M14 2L2 14" stroke="#222" strokeWidth="2" /></Icon></button>
      </header>
      <div className="flex border-t border-[#999]">
        <ul className="grid h-[262px] min-w-0 flex-1 auto-rows-fr">
          {navTree.map(([level, name, parent, fill], i) => (
            <NavRow key={name} index={i} level={level} name={name} parent={parent} fill={fill} />
          ))}
        </ul>
        <div className="flex w-[6px] shrink-0 flex-col items-center bg-[#f0f0f0]">
          <Icon className="m-px size-[4px]"><path d="M2 11l6-6 6 6" stroke="#444" strokeWidth="3" fill="none" /></Icon>
          <span className="h-[74px] w-[5px] bg-[#cdcdcd]" />
          <Icon className="m-px mt-auto size-[4px]"><path d="M2 5l6 6 6-6" stroke="#444" strokeWidth="3" fill="none" /></Icon>
        </div>
      </div>
    </section>
  );
}

function StatusBar() {
  return (
    <footer className="flex h-[16px] items-center border-t border-b-2 border-t-[#a9abad] border-b-black bg-[#eceef0] pr-[6px] pl-[2px] text-[#444]">
      <button aria-label="Toggle tree" className="flex size-[10px] items-center justify-center border border-[#c5c7c9] bg-white">
        <Icon className="size-[7px]"><path d="M3 1v14M3 8h7M1 1h5M1 15h5" stroke="#555" strokeWidth="2" /></Icon>
      </button>
      <button aria-label="Toggle browser" className="flex size-[10px] items-center justify-center">
        <Icon className="size-[8px]"><path d="M2 5l4-3h9v7l-4 4H2z" fill="#3e9ad0" /><path d="M5 8h6l-7 7z" fill="#1c5b93" /></Icon>
      </button>
      <p className="flex-1 pl-[10px]">PHONE_COMPLETE</p>
      <span className="size-[4px] rounded-full bg-[#22cf2c]" />
      <span className="mr-[4px] text-[5px] text-[#999]">••</span>
      <Icon className="mr-[12px] size-[6px]"><path d="M3 1v14M3 2h10l-3 4H3" fill="#bbb" stroke="#999" strokeWidth="1.500" /></Icon>
      <button aria-label="Find" className="mr-[3px] flex h-[11px] w-[15px] items-center justify-center border border-[#c9cbcd] bg-[#f4f5f6]">
        <Icon className="size-[8px]"><path d="M3 2h4v4h2V2h4l2 7v5H9v-4H7v4H1V9z" fill="#333" /></Icon>
      </button>
      <button aria-label="Select geometry" className="mr-[38px] flex h-[11px] w-[15px] items-center justify-center border border-[#c9cbcd] bg-[#f4f5f6]">
        <Icon className="size-[8px]"><path d="M2 4l3-3h9v10l-3 3H2z" fill="#dbe8f0" stroke="#5b7f99" strokeWidth="1.500" /><path d="M5 5h5v6H5z" fill="#8c9caa" /></Icon>
      </button>
      <div className="grid w-[60px] items-center">
        <select aria-label="Selection filter" className="col-start-1 row-start-1 h-[8px] appearance-none border border-[#c5c7c9] bg-white pl-[2px] leading-none">
          <option>Smart</option>
        </select>
        <Icon className="pointer-events-none col-start-1 row-start-1 mr-[2px] size-[3px] justify-self-end"><path d="M1 4h14l-7 9z" fill="#666" /></Icon>
      </div>
    </footer>
  );
}

export default function App() {
  return (
    <div className="flex min-h-screen flex-col overflow-hidden bg-[#fbfbfb] font-['Liberation_Sans',sans-serif] text-[4px] leading-[6px] text-[#333]">
      <TitleBar />
      <Tabs />
      <Ribbon />
      <div className="flex flex-1">
        <ModelTreePanel />
        <main className="relative flex flex-1 items-start pt-[20px] pl-[89px]">
          <ViewToolbar />
          <Phone />
          <Navigator />
          <div className="mr-[24px] ml-auto self-end pb-[2px] text-center text-[5px] leading-[6px] text-[#888]">
            <p>X.X +-0.1</p>
            <p>X.XX +-0.01</p>
            <p>X.XXX +-0.001</p>
            <p>ANG. +-0.5</p>
          </div>
        </main>
      </div>
      <StatusBar />
    </div>
  );
}
